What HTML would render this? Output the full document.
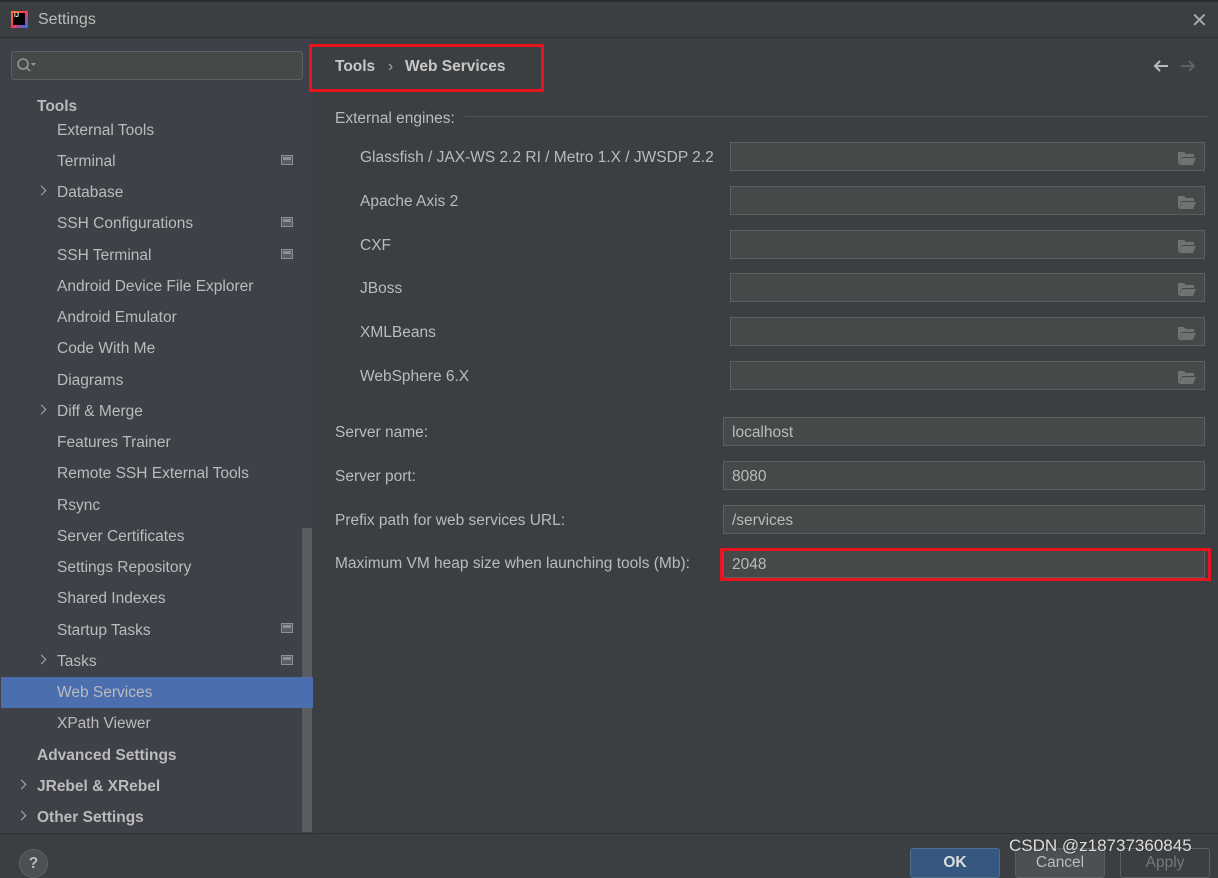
<!DOCTYPE html>
<html><head><meta charset="utf-8"><style>
*{margin:0;padding:0;box-sizing:border-box}
body{width:1218px;height:863px;background:#3c3f41;font-family:"Liberation Sans",sans-serif;font-size:15.5px;color:#bbbbbb;position:relative;overflow:hidden}
.a{position:absolute;white-space:nowrap}
.side{position:absolute;left:0;top:39px;width:313px;height:794px;background:#3e4147}
.it{position:absolute;left:57px;line-height:28px;white-space:nowrap}
.b{font-weight:bold}
.chev{position:absolute;width:7px;height:7px;border-right:1.5px solid #aaa;border-top:1.5px solid #aaa;transform:rotate(45deg)}
.ico{position:absolute;left:281px;width:12px;height:10px;border:1.5px solid #8c9094;background:#5a5e62}
.ico:after{content:"";position:absolute;left:1px;top:1px;right:1px;height:3px;background:#8c9094}
.fld{position:absolute;background:#45494a;border:1px solid #5e6060;height:29px}
.fold{position:absolute;right:8px;top:8px;width:18px;height:14px}
.lbl{position:absolute;left:360px;line-height:28px;white-space:nowrap}
.lbl2{position:absolute;left:335px;line-height:28px;white-space:nowrap}
.ftxt{position:absolute;left:8px;top:5px;line-height:20px}
</style></head><body>
<div class="a" style="left:0;top:0;width:1218px;height:2px;background:#2b2b2b"></div>
<div class="a" style="left:0;top:2px;width:1218px;height:36px;background:#3c3f41;border-bottom:1px solid #2f3133"></div>
<div class="a" style="left:11px;top:11px;width:17px;height:17px;background:linear-gradient(135deg,#fc801d,#fe315d 50%,#087cfa)"></div>
<div class="a" style="left:13px;top:13px;width:12px;height:12px;background:#000;color:#fff;font-size:6px;font-weight:bold;line-height:7px;padding-left:1px">IJ</div>
<div class="a" style="left:38px;top:11px;font-size:16px;color:#bbb">Settings</div>
<div class="a" style="left:1191px;top:8px;font-size:20px;color:#aaa">✕</div>

<div class="side"></div>
<div class="a" style="left:11px;top:51px;width:292px;height:29px;background:#45494a;border:1px solid #5e6060;border-radius:3px"></div>
<svg class="a" style="left:16px;top:57px" width="24" height="16"><circle cx="7" cy="7" r="5" stroke="#999" stroke-width="1.5" fill="none"/><line x1="10.5" y1="10.5" x2="14" y2="14" stroke="#999" stroke-width="1.5"/><path d="M15 6 h5 l-2.5 3z" fill="#999"/></svg>

<div class="it b" style="left:37px;top:93px">Tools</div>
<div class="it" style="top:117px">External Tools</div>
<div class="it" style="top:148px">Terminal</div><div class="ico" style="top:155px"></div>
<div class="chev" style="left:38px;top:187px"></div><div class="it" style="top:179px">Database</div>
<div class="it" style="top:210px">SSH Configurations</div><div class="ico" style="top:217px"></div>
<div class="it" style="top:242px">SSH Terminal</div><div class="ico" style="top:249px"></div>
<div class="it" style="top:273px">Android Device File Explorer</div>
<div class="it" style="top:304px">Android Emulator</div>
<div class="it" style="top:335px">Code With Me</div>
<div class="it" style="top:367px">Diagrams</div>
<div class="chev" style="left:38px;top:406px"></div><div class="it" style="top:398px">Diff &amp; Merge</div>
<div class="it" style="top:429px">Features Trainer</div>
<div class="it" style="top:460px">Remote SSH External Tools</div>
<div class="it" style="top:492px">Rsync</div>
<div class="it" style="top:523px">Server Certificates</div>
<div class="it" style="top:554px">Settings Repository</div>
<div class="it" style="top:585px">Shared Indexes</div>
<div class="it" style="top:617px">Startup Tasks</div><div class="ico" style="top:623px"></div>
<div class="chev" style="left:38px;top:656px"></div><div class="it" style="top:648px">Tasks</div><div class="ico" style="top:655px"></div>
<div class="a" style="left:302px;top:528px;width:10px;height:304px;background:#595c61"></div>
<div class="a" style="left:1px;top:677px;width:312px;height:31px;background:#4b6eaf"></div>
<div class="it" style="top:679px">Web Services</div>
<div class="it" style="top:710px">XPath Viewer</div>
<div class="it b" style="left:37px;top:742px">Advanced Settings</div>
<div class="chev" style="left:18px;top:781px"></div><div class="it b" style="left:37px;top:773px">JRebel &amp; XRebel</div>
<div class="chev" style="left:18px;top:812px"></div><div class="it b" style="left:37px;top:804px">Other Settings</div>

<div class="a b" style="left:335px;top:58px;color:#c8c8c8">Tools</div>
<div class="a" style="left:388px;top:58px;color:#aaa">›</div>
<div class="a b" style="left:405px;top:58px;color:#c8c8c8">Web Services</div>
<div class="a" style="left:309px;top:44px;width:235px;height:48px;border:3px solid #e8141f"></div>
<svg class="a" style="left:1152px;top:58px" width="56" height="16"><path d="M16 8H3M8 3L3 8l5 5" stroke="#bbb" stroke-width="2" fill="none"/><path d="M29 8h13M37 3l5 5-5 5" stroke="#5e6165" stroke-width="2" fill="none"/></svg>

<div class="lbl2" style="top:105px">External engines:</div>
<div class="a" style="left:465px;top:116px;width:743px;height:1px;background:#555"></div>
<div class="lbl" style="top:144px">Glassfish / JAX-WS 2.2 RI / Metro 1.X / JWSDP 2.2</div>
<div class="fld" style="left:730px;top:142px;width:475px"><svg class="fold" viewBox="0 0 18 14"><path d="M0 1h6l2 2h8v3H4L1 13H0z" fill="#6e7374"/><path d="M4 7h14l-3 7H1z" fill="#6e7374"/></svg></div>
<div class="lbl" style="top:188px">Apache Axis 2</div>
<div class="fld" style="left:730px;top:186px;width:475px"><svg class="fold" viewBox="0 0 18 14"><path d="M0 1h6l2 2h8v3H4L1 13H0z" fill="#6e7374"/><path d="M4 7h14l-3 7H1z" fill="#6e7374"/></svg></div>
<div class="lbl" style="top:232px">CXF</div>
<div class="fld" style="left:730px;top:230px;width:475px"><svg class="fold" viewBox="0 0 18 14"><path d="M0 1h6l2 2h8v3H4L1 13H0z" fill="#6e7374"/><path d="M4 7h14l-3 7H1z" fill="#6e7374"/></svg></div>
<div class="lbl" style="top:275px">JBoss</div>
<div class="fld" style="left:730px;top:273px;width:475px"><svg class="fold" viewBox="0 0 18 14"><path d="M0 1h6l2 2h8v3H4L1 13H0z" fill="#6e7374"/><path d="M4 7h14l-3 7H1z" fill="#6e7374"/></svg></div>
<div class="lbl" style="top:319px">XMLBeans</div>
<div class="fld" style="left:730px;top:317px;width:475px"><svg class="fold" viewBox="0 0 18 14"><path d="M0 1h6l2 2h8v3H4L1 13H0z" fill="#6e7374"/><path d="M4 7h14l-3 7H1z" fill="#6e7374"/></svg></div>
<div class="lbl" style="top:363px">WebSphere 6.X</div>
<div class="fld" style="left:730px;top:361px;width:475px"><svg class="fold" viewBox="0 0 18 14"><path d="M0 1h6l2 2h8v3H4L1 13H0z" fill="#6e7374"/><path d="M4 7h14l-3 7H1z" fill="#6e7374"/></svg></div>

<div class="lbl2" style="top:419px">Server name:</div>
<div class="fld" style="left:723px;top:417px;width:482px"><div class="ftxt">localhost</div></div>
<div class="lbl2" style="top:463px">Server port:</div>
<div class="fld" style="left:723px;top:461px;width:482px"><div class="ftxt">8080</div></div>
<div class="lbl2" style="top:507px">Prefix path for web services URL:</div>
<div class="fld" style="left:723px;top:505px;width:482px"><div class="ftxt">/services</div></div>
<div class="lbl2" style="top:550px">Maximum VM heap size when launching tools (Mb):</div>
<div class="fld" style="left:723px;top:549px;width:482px"><div class="ftxt">2048</div></div>
<div class="a" style="left:720px;top:548px;width:491px;height:33px;border:3px solid #e8141f"></div>

<div class="a" style="left:0;top:833px;width:1218px;height:1px;background:#2f3133"></div>
<div class="a" style="left:19px;top:849px;width:29px;height:29px;border-radius:50%;background:#4c5052;border:1px solid #5e6060;color:#bbb;font-weight:bold;text-align:center;line-height:27px">?</div>
<div class="a" style="left:910px;top:848px;width:90px;height:30px;background:#365880;border:1px solid #4c708c;border-radius:3px;color:#ddd;font-weight:bold;text-align:center;line-height:28px">OK</div>
<div class="a" style="left:1015px;top:848px;width:90px;height:30px;background:#4c5052;border:1px solid #5e6060;border-radius:3px;text-align:center;line-height:28px">Cancel</div>
<div class="a" style="left:1120px;top:848px;width:90px;height:30px;background:#3c3f41;border:1px solid #5e6060;border-radius:3px;color:#777;text-align:center;line-height:28px">Apply</div>
<div class="a" style="left:1009px;top:836px;font-size:17px;color:#ddd;text-shadow:0 0 2px #333">CSDN @z18737360845</div>
</body></html>
